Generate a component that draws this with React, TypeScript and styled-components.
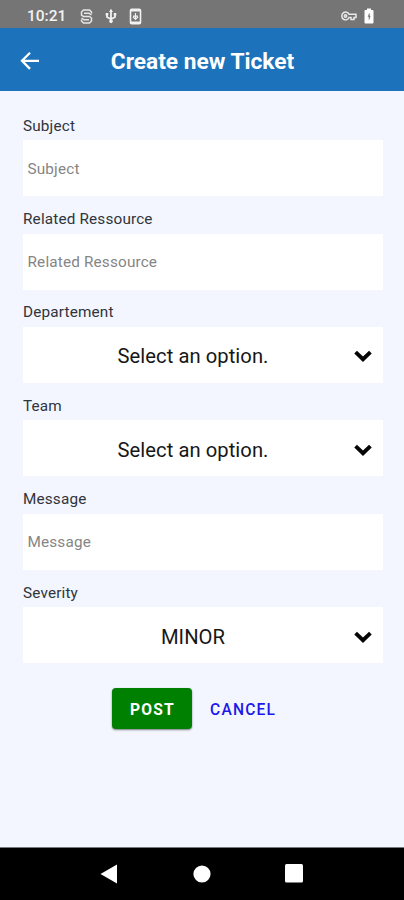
import React from "react";
import styled, { createGlobalStyle } from "styled-components";

const GlobalStyle = createGlobalStyle`
  * { box-sizing: border-box; }
  body { margin: 0; font-family: Roboto, "Liberation Sans", sans-serif; background: #f3f6fe; }
  button, input { font-family: inherit; }
`;

const Screen = styled.div`
  display: flex;
  flex-direction: column;
  width: 100%;
  height: 900px;
  background: #f3f6fe;
  overflow: hidden;
`;

const StatusBar = styled.div`
  display: flex;
  flex: none;
  align-items: center;
  justify-content: space-between;
  height: 28px;
  padding: 4px 30px 0 27px;
  background: #757575;
  color: #f2f2f2;
`;

const StatusGroup = styled.div<{ $gap: number }>`
  display: flex;
  align-items: center;
  gap: ${(p) => p.$gap}px;
`;

const Clock = styled.span`
  width: 41px;
  font-size: 15.5px;
  font-weight: 500;
  line-height: 18px;
  white-space: nowrap;
  margin-right: 1px;
`;

const Header = styled.header`
  display: grid;
  grid-template-columns: 60px 1fr 60px;
  flex: none;
  align-items: center;
  height: 63px;
  padding-top: 2px;
  background: #1d73bb;
  color: #fff;
`;

const BackButton = styled.button`
  display: flex;
  align-items: center;
  justify-content: center;
  height: 40px;
  padding: 0;
  border: 0;
  background: none;
  color: inherit;
`;

const Title = styled.h1`
  margin: 0;
  font-size: 22.7px;
  font-weight: 700;
  line-height: 28px;
  text-align: center;
  white-space: nowrap;
  padding: 2px 0 0 1px;
`;

const Form = styled.form`
  flex: 1;
  padding: 11.8px 21px 0 23px;
`;

const Field = styled.div`
  display: flex;
  flex-direction: column;
  height: 93.4px;
`;

const Label = styled.label`
  height: 37.4px;
  padding-top: 12.8px;
  font-size: 15.3px;
  line-height: 20px;
  letter-spacing: 0.17px;
  color: #30343b;
`;

const TextInput = styled.input`
  width: 100%;
  height: 56px;
  padding: 1px 5px 0 4.5px;
  border: 0;
  background: #fff;
  font-size: 15.3px;
  letter-spacing: 0.17px;
  &::placeholder { color: #858585; opacity: 1; }
`;

const SelectBox = styled.button`
  display: grid;
  grid-template-columns: 1fr 20px;
  align-items: center;
  width: 100%;
  height: 56px;
  padding: 3px 10px 0 10px;
  border: 0;
  background: #fff;
  color: #171717;
  font-size: 20.2px;
  letter-spacing: 0.06px;
`;

const Actions = styled.div`
  display: flex;
  align-items: center;
  gap: 18px;
  margin: 24.5px 0 0 89px;
`;

const ActionButton = styled.button<{ $primary?: boolean }>`
  width: ${(p) => (p.$primary ? "80px" : "auto")};
  height: 41px;
  padding: ${(p) => (p.$primary ? "3.5px 0 0 1px" : "3.5px 0 0")};
  border: 0;
  border-radius: 4px;
  background: ${(p) => (p.$primary ? "#008000" : "transparent")};
  box-shadow: ${(p) => (p.$primary ? "0 1px 2px rgba(0, 0, 0, 0.5)" : "none")};
  color: ${(p) => (p.$primary ? "#fff" : "#2017e8")};
  font-size: 15.6px;
  font-weight: ${(p) => (p.$primary ? 700 : 500)};
  letter-spacing: 1.2px;
`;

const NavBar = styled.nav`
  display: flex;
  flex: none;
  align-items: center;
  height: 53.5px;
  padding: 0 101px 0 100px;
  justify-content: space-between;
  border-top: 1px solid #77797d;
  background: #000;
`;

const Chevron = () => (
  <svg width="20" height="14" viewBox="0 0 20 14" fill="none">
    <path d="M2.6 3.2 10 10.2 17.4 3.2" stroke="#050505" strokeWidth="3.9" />
  </svg>
);

type FieldSpec = { label: string; value?: string };

const fields: FieldSpec[] = [
  { label: "Subject" },
  { label: "Related Ressource" },
  { label: "Departement", value: "Select an option." },
  { label: "Team", value: "Select an option." },
  { label: "Message" },
  { label: "Severity", value: "MINOR" },
];

export default function App() {
  return (
    <Screen>
      <GlobalStyle />
      <StatusBar>
        <StatusGroup $gap={11}>
          <Clock>10:21</Clock>
          <svg width="13" height="15" viewBox="0 0 13 15" fill="none" stroke="#e6e6e6" strokeWidth="1.5">
            <path d="M11.5 4.5V3L9.5 1h-6l-2 2v3l2 1.5h6l2 1.5v3l-2 2h-6l-2-2v-1.5M4 4.2h5L11.5 6M1.5 9 4 10.8h5" />
          </svg>
          <svg width="14" height="16" viewBox="0 0 14 16" fill="#f2f2f2" stroke="#f2f2f2">
            <path d="M7 2v12M3 6v3l4 2.3L11 9V6" fill="none" strokeWidth="1.8" />
            <path d="M7 .8 9 4H5zM1.7 5h2.6v2.4H1.7zM9.7 5h2.6v2.4H9.7z" stroke="none" />
            <circle cx="7" cy="13.3" r="1.4" />
          </svg>
          <svg width="13" height="17" viewBox="0 0 13 17" fill="none" stroke="#f2f2f2">
            <rect x="1.5" y="1.2" width="10" height="14.6" rx="1.3" strokeWidth="1.6" />
            <path d="M2 2.5h9M2 14.5h9" strokeWidth="2" />
            <path d="M6.5 5v6M4 8.8l2.5 2.5L9 8.8M4 8.2h5" strokeWidth="1.2" />
          </svg>
        </StatusGroup>
        <StatusGroup $gap={7}>
          <svg width="16" height="10" viewBox="0 0 16 10" fill="none" stroke="#e8e8e8" strokeWidth="1.5">
            <path d="M8 3.2C6.9.8 4.4.7 2.8 1.5 0 3 .2 7.3 3 8.5c2 .8 4.2-.1 5-2h2v2h3v-2h2V3.2z" />
            <circle cx="4.5" cy="5" r="1.2" />
          </svg>
          <svg width="10" height="16" viewBox="0 0 10 16">
            <path d="M3 .5h4V2h1.5q1 0 1 1v11.5q0 1-1 1h-7q-1 0-1-1V3q0-1 1-1H3z" fill="#fff" />
            <path d="M5.4 5.5 4 8.5h1v3L6.2 8H5.4z" fill="#757575" stroke="#757575" strokeWidth=".5" />
          </svg>
        </StatusGroup>
      </StatusBar>
      <Header>
        <BackButton type="button" aria-label="Back">
          <svg width="20" height="20" viewBox="0 0 20 20" fill="none" stroke="#fff" strokeWidth="2.3">
            <path d="M10 1.7 2 9.8 10 17.9M2 9.8h17" />
          </svg>
        </BackButton>
        <Title>Create new Ticket</Title>
      </Header>
      <Form>
        {fields.map(({ label, value }) => (
          <Field key={label}>
            <Label>{label}</Label>
            {value ? (
              <SelectBox type="button">
                <span>{value}</span>
                <Chevron />
              </SelectBox>
            ) : (
              <TextInput placeholder={label} />
            )}
          </Field>
        ))}
        <Actions>
          <ActionButton type="button" $primary>POST</ActionButton>
          <ActionButton type="button">CANCEL</ActionButton>
        </Actions>
      </Form>
      <NavBar>
        <svg width="18" height="20" viewBox="0 0 18 20"><path d="M.5 10 17 .6v18.8z" fill="#fff" /></svg>
        <svg width="18" height="18" viewBox="0 0 18 18"><circle cx="9" cy="9" r="8.6" fill="#fff" /></svg>
        <svg width="18" height="19" viewBox="0 0 18 19"><rect width="18" height="18.5" rx="1.5" fill="#fff" /></svg>
      </NavBar>
    </Screen>
  );
}
